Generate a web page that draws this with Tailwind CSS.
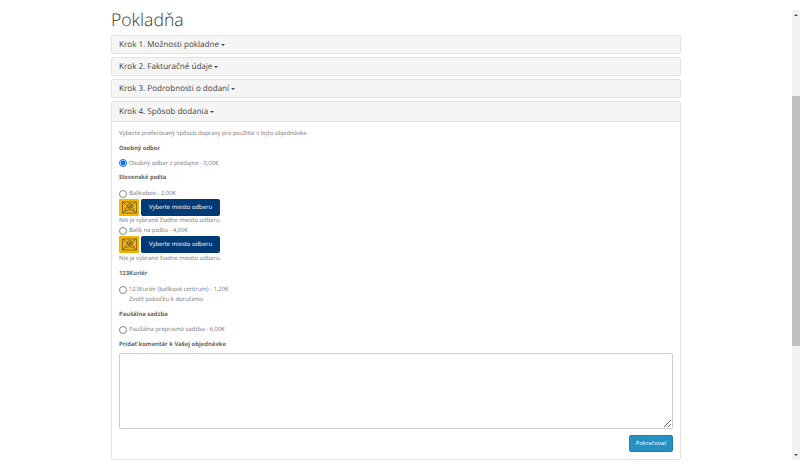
<!DOCTYPE html>
<html lang="sk">
<head>
    <meta charset="UTF-8">
    <title>Pokladňa</title>
    <script src="https://cdn.jsdelivr.net/npm/@tailwindcss/browser@4"></script>
</head>
<body class="bg-white font-['Open_Sans',sans-serif] text-[#777] overflow-hidden [text-rendering:geometricPrecision]">
<div class="flex h-[470px] w-[800px]">
    <div class="w-[792px] pl-[111px] pr-[111px]">
        <h1 class="h-[35px] pt-[9px] text-[17.6px] leading-[22px] font-light text-[#333]">Pokladňa</h1>

        <div class="flex flex-col gap-[3px]">
            <div class="h-[19px] pl-[7px] pt-[1px] flex items-center gap-[2px] bg-[#f5f5f5] border border-[#e3e3e3] rounded-[2px] text-[8.1px] text-[#444]">Krok 1. Možnosti pokladne <span class="border-x-[2px] border-t-[2px] border-x-transparent border-t-[#444]"></span></div>
            <div class="h-[19px] pl-[7px] pt-[1px] flex items-center gap-[2px] bg-[#f5f5f5] border border-[#e3e3e3] rounded-[2px] text-[8.1px] text-[#444]">Krok 2. Fakturačné údaje <span class="border-x-[2px] border-t-[2px] border-x-transparent border-t-[#444]"></span></div>
            <div class="h-[19px] pl-[7px] pt-[1px] flex items-center gap-[2px] bg-[#f5f5f5] border border-[#e3e3e3] rounded-[2px] text-[8.1px] text-[#444]">Krok 3. Podrobnosti o dodaní <span class="border-x-[2px] border-t-[2px] border-x-transparent border-t-[#444]"></span></div>

            <div class="h-[359px] border border-[#e3e3e3] rounded-[2px]">
                <div class="h-[20px] pl-[7px] pt-[1px] flex items-center gap-[2px] bg-[#f5f5f5] border-b border-[#e3e3e3] text-[8.1px] text-[#444]">Krok 4. Spôsob dodania <span class="border-x-[2px] border-t-[2px] border-x-transparent border-t-[#444]"></span></div>

                <div class="px-[7px] pt-[7px] text-[5.9px] leading-[9px]">
                    <p class="h-[15px]">Vyberte preferovaný spôsob dopravy pre použitie v tejto objednávke.</p>
                    <p class="h-[12px] font-bold text-[#666]">Osobný odbor</p>
                    <label class="h-[14px] mb-[3px] flex items-center gap-[2px]"><input type="radio" name="ship" checked class="m-0 w-[8px] h-[8px] accent-[#0a6fe8]"> Osobný odber z predajne - 0,00€</label>
                    <p class="h-[15px] font-bold text-[#666]">Slovenské pošta</p>

                    <label class="h-[11px] flex items-center gap-[2px]"><input type="radio" name="ship" class="m-0 w-[8px] h-[8px] appearance-none rounded-full border-[0.75px] border-[#888] bg-white"> Balíkobox - 2,00€</label>
                    <div class="flex gap-[2px] h-[17px]">
                        <div class="w-[20px] flex items-center justify-center bg-[#f5b400] rounded-[1px]">
                            <svg width="15" height="13" viewBox="0 0 15 13" fill="none" stroke="#5a5230" stroke-width="0.7"><rect x="0.5" y="1" width="14" height="11"/><path d="M1 1l6 6 7-6M1 12l4-6M14 12l-4-6M3 10q4-3 9 0"/><circle cx="8" cy="5" r="2.5"/><circle cx="8" cy="5" r="1"/></svg>
                        </div>
                        <div class="w-[79px] flex items-center justify-center bg-[#003a75] rounded-[2px] text-white">Vyberte miesto odberu</div>
                    </div>
                    <p class="h-[10px] leading-[9px]">Nie je vybrané žiadne miesto odberu.</p>

                    <label class="h-[9px] mb-[1px] flex items-center gap-[2px]"><input type="radio" name="ship" class="m-0 w-[8px] h-[8px] appearance-none rounded-full border-[0.75px] border-[#888] bg-white"> Balík na poštu - 4,00€</label>
                    <div class="flex gap-[2px] h-[17px]">
                        <div class="w-[20px] flex items-center justify-center bg-[#f5b400] rounded-[1px]">
                            <svg width="15" height="13" viewBox="0 0 15 13" fill="none" stroke="#5a5230" stroke-width="0.7"><rect x="0.5" y="1" width="14" height="11"/><path d="M1 1l6 6 7-6M1 12l4-6M14 12l-4-6M3 10q4-3 9 0"/><circle cx="8" cy="5" r="2.5"/><circle cx="8" cy="5" r="1"/></svg>
                        </div>
                        <div class="w-[79px] flex items-center justify-center bg-[#003a75] rounded-[2px] text-white">Vyberte miesto odberu</div>
                    </div>
                    <p class="h-[16px] leading-[11px]">Nie je vybrané žiadne miesto odberu.</p>

                    <p class="h-[15px] font-bold text-[#666]">123Kuriér</p>
                    <label class="h-[11px] flex items-center gap-[2px]"><input type="radio" name="ship" class="m-0 w-[8px] h-[8px] appearance-none rounded-full border-[0.75px] border-[#888] bg-white"> 123Kuriér (balíkové centrum) - 1,20€</label>
                    <p class="h-[15px] pl-[10px]">Zvoliť pobočku k doručeniu</p>
                    <p class="h-[12px] font-bold text-[#666]">Paušálna sadzba</p>
                    <label class="h-[15px] mb-[3px] flex items-center gap-[2px]"><input type="radio" name="ship" class="m-0 w-[8px] h-[8px] appearance-none rounded-full border-[0.75px] border-[#888] bg-white"> Paušálna prepravná sadzba - 6,00€</label>
                    <p class="h-[11px] font-bold text-[#666]">Pridať komentár k Vašej objednávke</p>

                    <textarea class="block mt-[2px] w-[554px] h-[76px] border border-[#ccc] rounded-[2px] bg-white"></textarea>

                    <div class="flex justify-end mt-[6px]">
                        <button class="w-[44px] h-[17px] bg-[#2590c2] border border-[#1f7fae] rounded-[2px] text-white text-[5.9px]">Pokračovať</button>
                    </div>
                </div>
            </div>
        </div>
    </div>

    <div class="w-[8px] h-[450px] mt-[10px] flex flex-col bg-[#f1f1f1]">
        <div class="h-[10px] flex items-center justify-center"><span class="border-x-[2px] border-b-[2px] border-x-transparent border-b-[#505050]"></span></div>
        <div class="h-[250px] mt-[76px] bg-[#c1c1c1]"></div>
        <div class="mt-auto h-[10px] flex items-center justify-center"><span class="border-x-[2px] border-t-[2px] border-x-transparent border-t-[#505050]"></span></div>
    </div>
</div>
</body>
</html>
